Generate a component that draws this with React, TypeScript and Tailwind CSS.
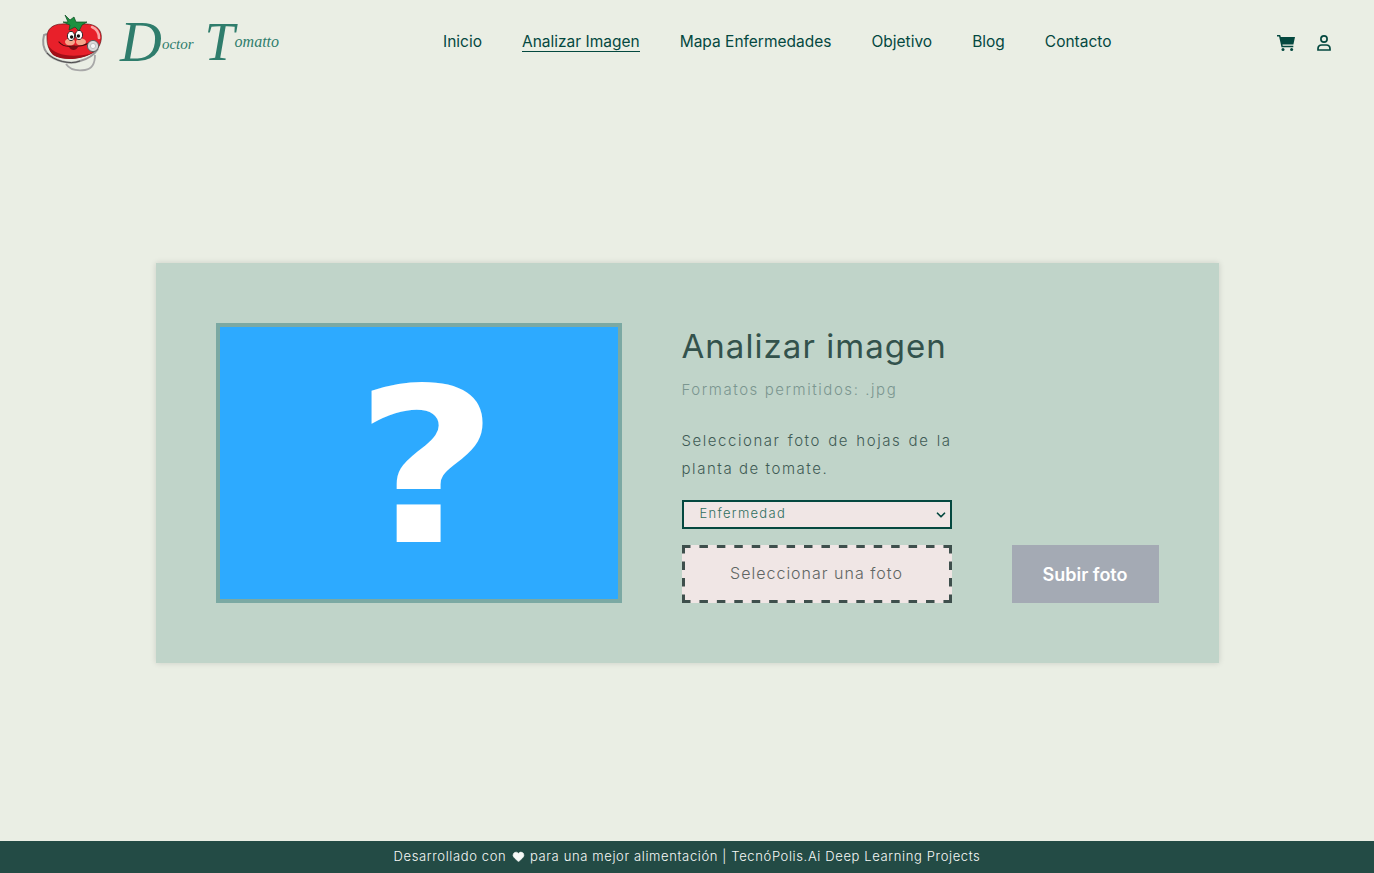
import { ChevronDown, Heart } from "lucide-react";

const navLinks = ["Inicio", "Analizar Imagen", "Mapa Enfermedades", "Objetivo", "Blog", "Contacto"];

function TomatoLogo() {
  return (
    <svg viewBox="0 0 70 66" className="h-[66px] w-[70px] shrink-0">
      {/* stethoscope */}
      <path d="M9 25 L6 26 C4 34 5 39 9 44 C16 52 32 56 42 52 C50 50 56 46 60 40" fill="none" stroke="#9a9a9a" strokeWidth="2" />
      <path d="M9 44 C16 52 32 56 42 52" fill="none" stroke="#2a2a2a" strokeWidth="0.7" />
      <path d="M28 55 C32 61 40 62 47 61 C54 60 57 54 57 46" fill="none" stroke="#a8a8a8" strokeWidth="1.8" />
      {/* body */}
      <path d="M9 30 C8 20 15 15 24 15 C30 14 32 17 38 16 C46 14 58 14 62 22 C65 28 63 38 56 43 C46 50 24 52 15 45 C11 41 9 36 9 30Z" fill="#e8202a" stroke="#4a0d10" strokeWidth="0.6" />
      <path d="M10 36 C16 46 32 49 52 45 C42 51 24 52 15 46 C12 43 11 40 10 36Z" fill="#a10f18" />
      <path d="M54 18 C59 20 61 24 61 29" fill="none" stroke="#f9a8a8" strokeWidth="2.6" strokeLinecap="round" />
      {/* leaves */}
      <path d="M27 6 L32 11 L36 8 L38 13 L49 13 L44 16 L41 22 L37 18 L31 21 L32 16 L25 13 L30 13Z" fill="#1c9140" stroke="#0b4a1f" strokeWidth="0.7" />
      {/* face */}
      <ellipse cx="32" cy="33" rx="5" ry="3.4" fill="#f4a58a" />
      <ellipse cx="43" cy="33" rx="5" ry="3.4" fill="#f4a58a" />
      <ellipse cx="33" cy="27" rx="3.6" ry="4.6" fill="#ffffff" stroke="#1c1c1c" strokeWidth="0.9" />
      <ellipse cx="41" cy="26" rx="3.6" ry="4.6" fill="#ffffff" stroke="#1c1c1c" strokeWidth="0.9" />
      <circle cx="33.6" cy="28" r="1.7" fill="#111" />
      <circle cx="40.4" cy="27" r="1.7" fill="#111" />
      <path d="M21 33 C25 38 30 38 36 37 C42 38 47 36 51 34" fill="none" stroke="#4a0b0b" strokeWidth="1.2" strokeLinecap="round" />
      <path d="M31 38 C33 42 38 42 40 38Z" fill="#7a0d12" />
      {/* chest piece */}
      <circle cx="55" cy="37" r="5.6" fill="#d9d9d9" stroke="#5f5f5f" strokeWidth="1" />
      <circle cx="55" cy="37" r="2.6" fill="#f5f5f5" stroke="#9a9a9a" strokeWidth="0.5" />
    </svg>
  );
}

function DashedFrame() {
  // the reference's dashes are longer than what the browser draws for border-dashed
  return (
    <svg viewBox="0 0 270 58" className="absolute inset-0 h-[58px] w-[270px]" fill="none" stroke="#3e4f4c" strokeWidth="3">
      <line x1="0" y1="1.5" x2="270" y2="1.5" strokeDasharray="8.5 8.93" />
      <line x1="0" y1="56.5" x2="270" y2="56.5" strokeDasharray="8.5 8.93" />
      <line x1="1.5" y1="0" x2="1.5" y2="58" strokeDasharray="8.5 8" />
      <line x1="268.5" y1="0" x2="268.5" y2="58" strokeDasharray="8.5 8" />
    </svg>
  );
}

export default function App() {
  return (
    <div className="flex min-h-[873px] flex-col bg-[#eaeee4] font-['Inter',sans-serif]">
      <header className="flex h-[84px] items-center pl-[38px] pr-[43px]">
        <div className="flex w-[300px] items-center">
          <TomatoLogo />
          <span className="ml-[12px] flex items-center whitespace-nowrap font-['Liberation_Serif',serif] italic text-[#2f7d6c]">
            <span className="text-[58px] leading-none">D</span>
            <span className="mt-[4px] text-[15px] leading-none">octor</span>
            <span className="ml-[11px] text-[54px] leading-none">T</span>
            <span className="text-[16px] leading-none">omatto</span>
          </span>
        </div>
        <nav className="ml-[105px] flex items-center gap-10 text-[15.5px] text-[#04483f]">
          {navLinks.map((link) => (
            <a key={link} className={link === "Analizar Imagen" ? "border-b border-[#04483f] leading-[19px]" : "border-b border-transparent leading-[19px]"}>
              {link}
            </a>
          ))}
        </nav>
        <div className="ml-auto mt-[1px] flex items-center gap-[22px] text-[#04483f]">
          <svg viewBox="0 0 18 16" className="h-[16px] w-[18px]" fill="currentColor">
            <path d="M0 0h3.2l.6 2H18l-1.6 7.4H5.4l.3 1.4h10.6V12.2H4.5L2.1 1.4H0z" />
            <circle cx="6" cy="14.4" r="1.5" />
            <circle cx="14.6" cy="14.4" r="1.5" />
          </svg>
          <svg viewBox="0 0 14 16" className="h-[16px] w-[14px]" fill="none" stroke="currentColor" strokeWidth="1.7">
            <circle cx="7" cy="4" r="3.1" />
            <path d="M1 15v-1.2c0-2.4 1.8-3.8 3.8-3.8h4.4c2 0 3.8 1.4 3.8 3.8V15z" />
          </svg>
        </div>
      </header>

      <main className="flex flex-1 items-start justify-center pt-[179px]">
        <section className="flex h-[400px] w-[1063px] gap-[60px] bg-[#c0d4c9] p-[60px] shadow-[0_0_6px_rgba(0,0,0,0.14)]">
          <div className="flex h-[280px] w-[406px] shrink-0 items-center justify-center overflow-hidden border-4 border-[#7ba9a3] bg-[#2daaff] pl-[16px] pt-[10px]">
            <span className="scale-x-[1.15] font-['DejaVu_Sans',sans-serif] text-[216px] font-bold leading-none text-white">?</span>
          </div>
          <div className="flex flex-1 flex-col">
            <h1 className="text-[33px] font-normal leading-[46px] tracking-[1.05px] text-[#33524c]">Analizar imagen</h1>
            <p className="mt-[7px] text-[15px] font-light leading-[28px] tracking-[1.55px] text-[#7b9690]">Formatos permitidos: .jpg</p>
            <div className="mt-[11px] flex flex-1 items-end gap-[60px]">
              <div className="flex w-[270px] flex-col">
                <p className="text-[15px] font-light leading-[28px] tracking-[1.55px] text-[#3f5b55] [text-align:justify]">
                  Seleccionar foto de hojas de la planta de tomate.
                </p>
                <div className="relative mt-[17px] flex h-[29px] items-center border-2 border-[#04483f] bg-[#f0e6e5] pb-[2px] pl-[16px] text-[13px] font-light tracking-[1.3px] text-[#2f6e60]">
                  Enfermedad
                  <ChevronDown className="absolute right-[2px] top-[6px] h-[14px] w-[14px] text-[#04483f]" strokeWidth={3} />
                </div>
                <div className="relative mt-[16px] flex h-[58px] items-center justify-center bg-[#f0e6e5] pb-[2px] text-[16px] font-light tracking-[1px] text-[#5f6563]">
                  <DashedFrame />
                  Seleccionar una foto
                </div>
              </div>
              <button className="flex h-[58px] w-[147px] items-center justify-center bg-[#a4aab4] text-[18px] font-semibold text-white">
                Subir foto
              </button>
            </div>
          </div>
        </section>
      </main>

      <footer className="flex h-[32px] items-center justify-center whitespace-pre bg-[#234b45] text-[13px] font-light tracking-[0.63px] text-[#f7f9f7]">
        Desarrollado con <Heart className="mx-[1px] -mt-[1px] h-[13px] w-[13px]" fill="currentColor" strokeWidth={1} /> para una mejor alimentación | TecnóPolis.Ai Deep Learning Projects
      </footer>
    </div>
  );
}
